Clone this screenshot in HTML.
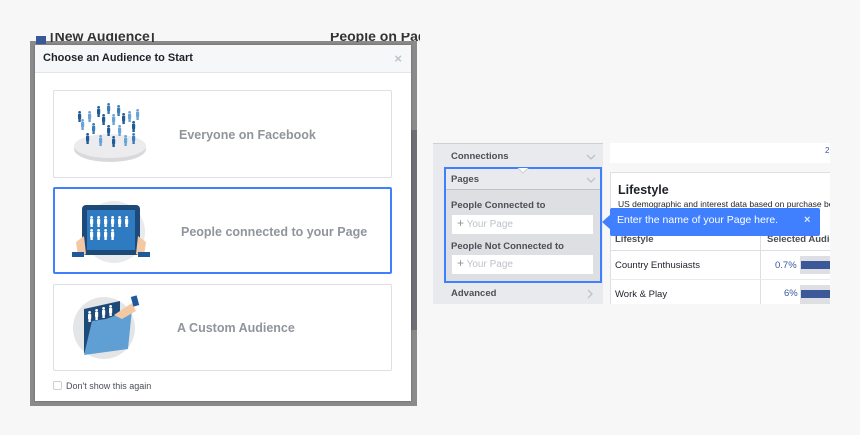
<!DOCTYPE html>
<html><head><style>
*{margin:0;padding:0;box-sizing:border-box}
body{width:860px;height:435px;background:#f7f7f7;font-family:"Liberation Sans",Arial,sans-serif;position:relative;overflow:hidden}
.a{position:absolute}
.card{position:absolute;left:53px;width:339px;background:#fff;border:1px solid #dddfe2;border-radius:2px}
.card .t{position:absolute;font-size:12.5px;font-weight:bold;color:#90949c}
.chev{position:absolute;width:10px;height:6px}
</style></head><body>
<svg width="0" height="0" style="position:absolute"><defs>
<g id="p"><circle cx="1.6" cy="1.4" r="1.4"/><rect x="0" y="3" width="3.2" height="5" rx="0.6"/><rect x="0.4" y="7" width="2.4" height="4"/></g>
</defs></svg>
<!-- backdrop -->
<div class="a" style="left:30px;top:41px;width:387px;height:365px;background:#8a8a8a"></div>
<div class="a" style="left:36px;top:36px;width:10px;height:8px;background:#3b5998"></div>
<div class="a" style="left:50px;top:33px;height:9px;width:120px;overflow:hidden"><div style="position:absolute;top:-5px;font-size:14px;font-weight:bold;color:#333;white-space:nowrap">[New Audience]</div></div>
<div class="a" style="left:330px;top:33px;height:9px;width:90px;overflow:hidden"><div style="position:absolute;top:-5px;font-size:14px;font-weight:bold;color:#333;white-space:nowrap">People on Page</div></div>
<div class="a" style="left:411px;top:130px;width:6px;height:200px;background:#6d6f75"></div>
<!-- dialog -->
<div class="a" style="left:35px;top:45px;width:376px;height:356px;background:#fff;box-shadow:0 0 2px rgba(0,0,0,.3)">
  <div style="height:28px;background:#f6f7f9;border-bottom:1px solid #e5e5e5;padding:7px 0 0 8px;font-size:11px;font-weight:bold;color:#1d2129">Choose an Audience to Start</div>
  <div class="a" style="right:9px;top:6px;color:#bec2c9;font-size:13px;font-weight:bold">×</div>
</div>
<div class="card" style="top:90px;height:88px">
  <svg class="a" style="left:18px;top:10px" width="76" height="64" viewBox="0 0 76 64">
    <ellipse cx="38" cy="48" rx="36" ry="13" fill="#d8d9db"/>
    <ellipse cx="38" cy="45" rx="36" ry="12" fill="#ececee"/>
    <g fill="#3c7cb8">
      <use href="#p" x="35" y="2"/><use href="#p" x="25" y="5" fill="#1f5c96"/><use href="#p" x="45" y="4"/>
      <use href="#p" x="16" y="10" fill="#6aa3d5"/><use href="#p" x="30" y="13" fill="#1f5c96"/><use href="#p" x="40" y="13" fill="#6aa3d5"/><use href="#p" x="50" y="12" fill="#1f5c96"/>
      <use href="#p" x="56" y="10" fill="#6aa3d5"/><use href="#p" x="9" y="18" fill="#6aa3d5"/><use href="#p" x="20" y="22"/>
      <use href="#p" x="35" y="24" fill="#1f5c96"/><use href="#p" x="46" y="24" fill="#6aa3d5"/><use href="#p" x="60" y="20" fill="#1f5c96"/>
      <use href="#p" x="14" y="32" fill="#1f5c96"/><use href="#p" x="27" y="34" fill="#6aa3d5"/><use href="#p" x="40" y="35" fill="#1f5c96"/><use href="#p" x="52" y="34" fill="#6aa3d5"/><use href="#p" x="60" y="32"/>
      <use href="#p" x="6" y="10" fill="#1f5c96"/><use href="#p" x="64" y="8" fill="#6aa3d5"/>
    </g>
  </svg>
  <div class="t" style="left:125px;top:37px">Everyone on Facebook</div>
</div>
<div class="card" style="top:187px;height:87px;border:2px solid #4080ff">
  <svg class="a" style="left:17px;top:9px" width="80" height="66" viewBox="0 0 80 66">
    <circle cx="42" cy="34" r="31" fill="#e9eaed"/>
    <rect x="10" y="7" width="58" height="50" rx="4" fill="#1e4a7a"/>
    <rect x="15" y="12" width="48" height="40" fill="#2f7bc1"/>
    <g fill="#fff"><use href="#p" x="18" y="18"/><use href="#p" x="25" y="18"/><use href="#p" x="32" y="18"/><use href="#p" x="39" y="18"/><use href="#p" x="46" y="18"/><use href="#p" x="53" y="18"/>
    <use href="#p" x="18" y="31"/><use href="#p" x="25" y="31"/><use href="#p" x="32" y="31"/><use href="#p" x="39" y="31"/></g>
    <path d="M4 44 L12 38 L14 56 L6 58Z" fill="#f2c9a4"/><path d="M74 44 L66 38 L64 56 L72 58Z" fill="#f2c9a4"/>
    <rect x="0" y="54" width="12" height="5" fill="#1e5a9a"/><rect x="66" y="54" width="12" height="5" fill="#1e5a9a"/>
  </svg>
  <div class="t" style="left:126px;top:36px">People connected to your Page</div>
</div>
<div class="card" style="top:284px;height:87px">
  <svg class="a" style="left:18px;top:8px" width="74" height="66" viewBox="0 0 74 66">
    <circle cx="32" cy="35" r="31" fill="#e4e5e7"/>
    <path d="M12 16 L48 8 L48 54 L12 60Z" fill="#1e4a7a"/>
    <g fill="#fff"><use href="#p" x="16" y="18"/><use href="#p" x="23" y="16"/><use href="#p" x="30" y="14"/><use href="#p" x="37" y="12"/></g>
    <path d="M12 62 L20 28 L34 26 L60 16 L56 56Z" fill="#5f9fd4"/>
    <path d="M42 22 L60 10 L64 18 L50 26Z" fill="#f2c9a4"/>
    <rect x="60" y="3" width="6" height="10" fill="#1e5a9a" transform="rotate(-15 63 8)"/>
  </svg>
  <div class="t" style="left:123px;top:36px">A Custom Audience</div>
</div>
<div class="a" style="left:53px;top:381px;width:9px;height:9px;border:1px solid #ccd0d5;border-radius:2px;background:#fff"></div>
<div class="a" style="left:66px;top:381px;font-size:9px;color:#4b4f56">Don't show this again</div>

<!-- right panel -->
<div class="a" style="left:433px;top:143px;width:170px;height:161px;background:#e9eaed"></div>
<div class="a" style="left:433px;top:143px;width:170px;height:1px;background:#ccd0d5"></div>
<div class="a" style="left:451px;top:151px;font-size:9.5px;font-weight:bold;color:#4b4f56">Connections</div>
<svg class="chev" style="left:586px;top:154px" viewBox="0 0 10 6"><path d="M1 1 L5 5 L9 1" fill="none" stroke="#bec2c9" stroke-width="1.3"/></svg>
<div class="a" style="left:444px;top:167px;width:158px;height:116px;border:2px solid #4080ff;background:#dddfe2"></div>
<div class="a" style="left:446px;top:169px;width:154px;height:21px;background:#e9eaed;border-bottom:1px solid #bec2c9"></div>
<svg class="a" style="left:517px;top:168px" width="12" height="6" viewBox="0 0 12 6"><path d="M1 0 L6 5 L11 0" fill="#fff" stroke="#ccd0d5"/></svg>
<div class="a" style="left:451px;top:174px;font-size:9.5px;font-weight:bold;color:#4b4f56">Pages</div>
<svg class="chev" style="left:586px;top:177px" viewBox="0 0 10 6"><path d="M1 1 L5 5 L9 1" fill="none" stroke="#bec2c9" stroke-width="1.3"/></svg>
<div class="a" style="left:451px;top:200px;font-size:9.5px;font-weight:bold;color:#4b4f56">People Connected to</div>
<div class="a" style="left:452px;top:215px;width:141px;height:19px;background:#fff;font-size:10px;color:#bec2c9;padding:3px 0 0 5px"><span style="color:#90949c;font-size:12px;line-height:10px">+</span> Your Page</div>
<div class="a" style="left:451px;top:241px;font-size:9.5px;font-weight:bold;color:#4b4f56">People Not Connected to</div>
<div class="a" style="left:452px;top:255px;width:141px;height:19px;background:#fff;font-size:10px;color:#bec2c9;padding:3px 0 0 5px"><span style="color:#90949c;font-size:12px;line-height:10px">+</span> Your Page</div>
<div class="a" style="left:451px;top:288px;font-size:9.5px;font-weight:bold;color:#4b4f56">Advanced</div>
<svg class="a" style="left:587px;top:289px" width="6" height="10" viewBox="0 0 6 10"><path d="M1 1 L5 5 L1 9" fill="none" stroke="#bec2c9" stroke-width="1.3"/></svg>

<div class="a" style="left:610px;top:143px;width:220px;height:20px;background:#fff"></div>
<div class="a" style="left:825px;top:146px;font-size:8px;color:#365899">2</div>
<div class="a" style="left:610px;top:172px;width:220px;height:132px;background:#fff;border-top:1px solid #dddfe2;border-left:1px solid #dddfe2"></div>
<div class="a" style="left:618px;top:183px;font-size:12.5px;font-weight:bold;color:#1d2129">Lifestyle</div>
<div class="a" style="left:618px;top:199px;font-size:8.5px;color:#1d2129;white-space:nowrap;width:212px;overflow:hidden">US demographic and interest data based on purchase be</div>
<div class="a" style="left:610px;top:227px;width:220px;height:24px;border-bottom:1px solid #dddfe2"></div>
<div class="a" style="left:760px;top:227px;width:1px;height:77px;background:#dddfe2"></div>
<div class="a" style="left:615px;top:234px;font-size:9.5px;font-weight:bold;color:#4b4f56">Lifestyle</div>
<div class="a" style="left:767px;top:234px;font-size:9.5px;font-weight:bold;color:#4b4f56;white-space:nowrap;width:63px;overflow:hidden">Selected Audie</div>
<div class="a" style="left:610px;top:279px;width:220px;height:1px;background:#e9eaed"></div>
<div class="a" style="left:615px;top:260px;font-size:9.5px;color:#1d2129">Country Enthusiasts</div>
<div class="a" style="left:775px;top:260px;font-size:9.5px;color:#365899">0.7%</div>
<div class="a" style="left:800px;top:256px;width:30px;height:18px;background:#dddfe2"></div>
<div class="a" style="left:801px;top:261px;width:29px;height:8px;background:#3b5998"></div>
<div class="a" style="left:615px;top:289px;font-size:9.5px;color:#1d2129">Work &amp; Play</div>
<div class="a" style="left:784px;top:288px;font-size:9.5px;color:#365899">6%</div>
<div class="a" style="left:800px;top:285px;width:30px;height:19px;background:#dddfe2"></div>
<div class="a" style="left:801px;top:290px;width:29px;height:8px;background:#3b5998"></div>

<!-- tooltip -->
<div class="a" style="left:610px;top:208px;width:210px;height:28px;background:#4080ff;border-radius:2px"></div>
<div class="a" style="left:602px;top:214px;width:0;height:0;border-top:8px solid transparent;border-bottom:8px solid transparent;border-right:9px solid #4080ff"></div>
<div class="a" style="left:617px;top:214px;font-size:10.5px;color:#fff">Enter the name of your Page here.</div>
<div class="a" style="left:804px;top:214px;font-size:11px;color:#dbe6ff;font-weight:bold">×</div>
</body></html>
